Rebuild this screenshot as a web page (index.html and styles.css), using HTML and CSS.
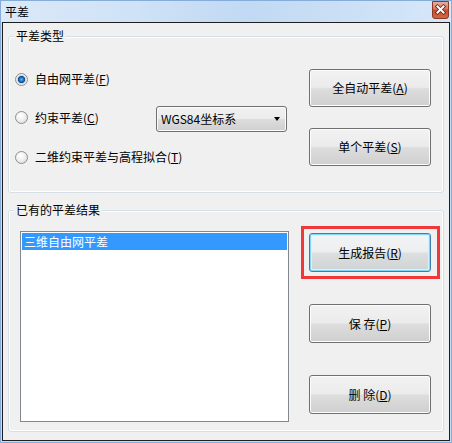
FILE: index.html
```html
<!DOCTYPE html>
<html lang="zh-CN">
<head>
<meta charset="utf-8">
<title>平差</title>
<link rel="stylesheet" href="styles.css">
</head>
<body>
<div class="window">
  <div class="titlebar">
    <span class="title">平差</span>
    <span class="close">
      <svg width="17" height="18" viewBox="0 0 17 18">
        <defs>
          <linearGradient id="cg" x1="0" y1="0" x2="0" y2="1">
            <stop offset="0" stop-color="#eab3a3"/>
            <stop offset="0.45" stop-color="#d9735a"/>
            <stop offset="0.5" stop-color="#c84a2e"/>
            <stop offset="1" stop-color="#cf6a45"/>
          </linearGradient>
        </defs>
        <path d="M0.5 0.5 H16.5 V15 Q16.5 17.5 14 17.5 H3 Q0.5 17.5 0.5 15 Z" fill="url(#cg)" stroke="#8a3a28"/>
        <path d="M5.5 5.5 L11.5 11.5 M11.5 5.5 L5.5 11.5" stroke="#5a2418" stroke-width="3.6" stroke-linecap="square"/>
        <path d="M5.5 5.5 L11.5 11.5 M11.5 5.5 L5.5 11.5" stroke="#ffffff" stroke-width="2" stroke-linecap="square"/>
      </svg>
    </span>
  </div>
  <div class="client">
    <div class="group group-type">
      <div class="group-title">平差类型</div>
      <div class="group-body body-type">
        <div class="options">
          <div class="opt opt-first"><span class="radio checked"></span><span class="opt-label">自由网平差(<u>F</u>)</span></div>
          <div class="opt opt-second"><span class="radio"></span><span class="opt-label">约束平差(<u>C</u>)</span>
            <div class="combo"><span class="combo-text">WGS84坐标系</span><span class="arrow"></span></div>
          </div>
          <div class="opt opt-third"><span class="radio"></span><span class="opt-label">二维约束平差与高程拟合(<u>T</u>)</span></div>
        </div>
        <div class="actions actions-type">
          <button class="btn">全自动平差(<u>A</u>)</button>
          <button class="btn btn-gap-sm">单个平差(<u>S</u>)</button>
        </div>
      </div>
    </div>
    <div class="group group-results">
      <div class="group-title">已有的平差结果</div>
      <div class="group-body body-results">
        <div class="listbox">
          <div class="list-item selected">三维自由网平差</div>
        </div>
        <div class="actions actions-results">
          <div class="mark">
            <button class="btn btn-tall btn-default">生成报告(<u>R</u>)</button>
          </div>
          <button class="btn btn-tall btn-gap-lg">保 存(<u>P</u>)</button>
          <button class="btn btn-tall btn-gap-lg">删 除(<u>D</u>)</button>
        </div>
      </div>
    </div>
  </div>
</div>
</body>
</html>
```

FILE: styles.css
```css
* { box-sizing: border-box; }

html, body {
  margin: 0;
  padding: 0;
  width: 452px;
  height: 443px;
  overflow: hidden;
  background: #c4daf2;
}

body {
  font-family: "Noto Sans CJK SC", "Microsoft YaHei", sans-serif;
  font-size: 12px;
  color: #000;
}

.window {
  width: 452px;
  height: 443px;
  border: 1px solid #86acd9;
  background: #c6dcf4;
  display: flex;
  flex-direction: column;
  padding: 0 1px 1px 1px;
}

.titlebar {
  height: 21px;
  display: flex;
  justify-content: space-between;
  align-items: flex-start;
  background: linear-gradient(90deg, #dbe9f8 0%, #cfe2f6 30%, #c1d9f3 55%, #cde1f6 80%, #d6e7f8 100%);
  margin: 0 -1px;
  padding: 0 2px 0 4px;
}

.title {
  line-height: 21px;
  height: 21px;
  font-size: 12px;
}

.close {
  display: block;
  width: 17px;
  height: 18px;
}

.close svg { display: block; }

.client {
  flex: 1;
  border: 1px solid #1f1f1f;
  background: #f0f0f0;
  display: flex;
  flex-direction: column;
  padding: 0 5px;
}

.group {
  border: 1px solid #d5dfe5;
  border-radius: 3px;
  box-shadow: inset 0 0 0 1px #ffffff;
}

.group-type {
  margin-top: 13px;
  height: 157px;
}

.group-results {
  margin-top: 17px;
  height: 222px;
}

.group-title {
  width: fit-content;
  margin: -8px 0 0 5px;
  padding: 0 2px;
  line-height: 14px;
  height: 14px;
  background: #f0f0f0;
  white-space: nowrap;
}

.group-body {
  display: flex;
  justify-content: space-between;
  align-items: flex-start;
}

.body-type {
  padding: 23px 12px 0 6px;
}

.body-results {
  padding: 14px 12px 0 11px;
}

.options {
  width: 272px;
  display: flex;
  flex-direction: column;
}

.opt {
  height: 26px;
  display: flex;
  align-items: center;
  white-space: nowrap;
  line-height: 14px;
}

.opt-second { margin-top: 14px; }
.opt-third { margin-top: 12px; }

.radio {
  width: 13px;
  height: 13px;
  border-radius: 50%;
  border: 1px solid #8c8e90;
  background: radial-gradient(circle at 40% 35%, #ffffff 0, #f4f4f4 35%, #d6d6d6 100%);
  margin-right: 7px;
  flex: none;
}

.radio.checked {
  background: radial-gradient(circle at 50% 50%, #5fc0f7 0, #2a86d6 1.5px, #10488e 3.2px, #cfd6dd 4px, #f6f6f6 5.5px);
}

.opt-second .radio { margin-top: -3px; }
.opt-second .opt-label { margin-top: -3px; }

.opt-label u,
.btn u { text-decoration: underline; text-underline-offset: 1px; }

.combo {
  margin-left: auto;
  width: 131px;
  height: 26px;
  border: 1px solid #707070;
  border-radius: 3px;
  background: linear-gradient(#f2f2f2 0%, #ebebeb 50%, #dddddd 51%, #cfcfcf 100%);
  box-shadow: inset 0 0 0 1px #fbfbfb;
  display: flex;
  align-items: center;
  justify-content: space-between;
  padding: 0 6px 0 4px;
  font-size: 12px;
}

.arrow {
  width: 0;
  height: 0;
  border-left: 3.5px solid transparent;
  border-right: 3.5px solid transparent;
  border-top: 4px solid #000;
}

.actions {
  display: flex;
  flex-direction: column;
}

.actions-type { margin-top: 3px; }

.btn {
  display: block;
  width: 122px;
  height: 38px;
  border: 1px solid #707070;
  border-radius: 3px;
  background: linear-gradient(#f2f2f2 0%, #ebebeb 48%, #dddddd 52%, #cfcfcf 100%);
  box-shadow: inset 0 0 0 1px #fcfcfc;
  font-family: inherit;
  font-size: 12px;
  color: #000;
  padding: 0;
  line-height: 14px;
  margin: 0;
}

.btn-tall { height: 39px; }
.btn-gap-sm { margin-top: 21px; }
.btn-gap-lg { margin-top: 32px; }

.actions-results { margin-top: 2px; }

.mark {
  border: 3px solid #f0373a;
  padding: 4px 6px 4px 5px;
  margin: -7px -9px -7px -8px;
}

.btn-default {
  border-color: #3c7fb1;
  box-shadow: inset 0 0 0 1px #7fd6f6, inset 0 0 0 2px #d8f1fb;
  background: linear-gradient(#f2f4f5 0%, #eceeef 48%, #dcdfe0 52%, #d0d3d4 100%);
}

.listbox {
  width: 269px;
  height: 191px;
  border: 1px solid #828790;
  background: #ffffff;
  padding: 1px;
}

.list-item {
  height: 17px;
  line-height: 17px;
  padding-left: 2px;
  white-space: nowrap;
}

.list-item.selected {
  background: #3399ff;
  color: #ffffff;
}
```
